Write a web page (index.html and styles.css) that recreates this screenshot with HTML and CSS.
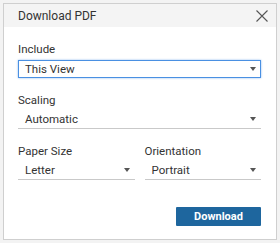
FILE: index.html
```html
<!DOCTYPE html>
<html lang="en">
<head>
    <meta charset="UTF-8">
    <title>Download PDF</title>
    <link rel="stylesheet" href="styles.css">
</head>
<body>
    <div class="backdrop">
        <div class="dialog">
            <div class="dialog-header">
                <span class="dialog-title">Download PDF</span>
                <button class="close-button" aria-label="Close">
                    <svg width="12" height="12" viewBox="0 0 12 12">
                        <path d="M0.5 0.5 L11.5 11.5 M11.5 0.5 L0.5 11.5" stroke="#555" stroke-width="1.1" fill="none"/>
                    </svg>
                </button>
            </div>

            <div class="dialog-body">
                <div class="field">
                    <label class="field-label">Include</label>
                    <div class="select select-focused">
                        <span>This View</span>
                        <span class="arrow"></span>
                    </div>
                </div>

                <div class="field">
                    <label class="field-label">Scaling</label>
                    <div class="select">
                        <span>Automatic</span>
                        <span class="arrow"></span>
                    </div>
                </div>

                <div class="field-row">
                    <div class="field">
                        <label class="field-label">Paper Size</label>
                        <div class="select">
                            <span>Letter</span>
                            <span class="arrow"></span>
                        </div>
                    </div>
                    <div class="field">
                        <label class="field-label">Orientation</label>
                        <div class="select">
                            <span>Portrait</span>
                            <span class="arrow"></span>
                        </div>
                    </div>
                </div>

                <div class="dialog-footer">
                    <button class="download-button">Download</button>
                </div>
            </div>
        </div>
    </div>
</body>
</html>
```

FILE: styles.css
```css
body {
    margin: 0;
    background: #f3f3f3;
    font-family: Roboto, "Liberation Sans", sans-serif;
    font-size: 11.5px;
    color: #333;
}

.backdrop {
    padding: 3px;
    height: 243px;
    box-sizing: border-box;
}

.dialog {
    width: 274px;
    height: 237px;
    box-sizing: border-box;
    background: white;
    border: 1px solid #cfcfcf;
    display: flex;
    flex-direction: column;
}

.dialog-header {
    height: 23px;
    background: #f4f4f4;
    display: flex;
    align-items: center;
    justify-content: space-between;
    padding: 0 6px 0 14px;
}

.dialog-title {
    font-size: 12px;
    color: #333;
}

.close-button {
    border: none;
    background: none;
    padding: 0;
    width: 16px;
    height: 16px;
    display: flex;
    align-items: center;
    justify-content: center;
    cursor: pointer;
}

.dialog-body {
    flex: 1;
    padding: 15px 15px 0 14px;
    display: flex;
    flex-direction: column;
}

.field {
    display: flex;
    flex-direction: column;
    margin-bottom: 15px;
}

.field-label {
    line-height: 14px;
    margin-bottom: 3px;
}

.select {
    height: 19px;
    box-sizing: border-box;
    border-bottom: 1px solid #c9c9c9;
    display: flex;
    align-items: center;
    justify-content: space-between;
    padding: 0 5px 0 7px;
}

.select-focused {
    height: 18px;
    margin-top: 1px;
    border: 1px solid #4a90e2;
    box-shadow: 0 0 2px #8fbcf0;
    padding: 0 4px 0 6px;
}

.arrow {
    width: 0;
    height: 0;
    border-left: 3.5px solid transparent;
    border-right: 3.5px solid transparent;
    border-top: 4px solid #555;
}

.field-row {
    display: grid;
    grid-template-columns: 1fr 1fr;
    column-gap: 10px;
}

.dialog-footer {
    display: flex;
    justify-content: flex-end;
    margin-top: 12px;
}

.download-button {
    width: 85px;
    height: 19px;
    background: #1e669e;
    color: white;
    border: none;
    border-radius: 1px;
    font-family: Roboto, "Liberation Sans", sans-serif;
    font-size: 11px;
    font-weight: bold;
    cursor: pointer;
}
```
